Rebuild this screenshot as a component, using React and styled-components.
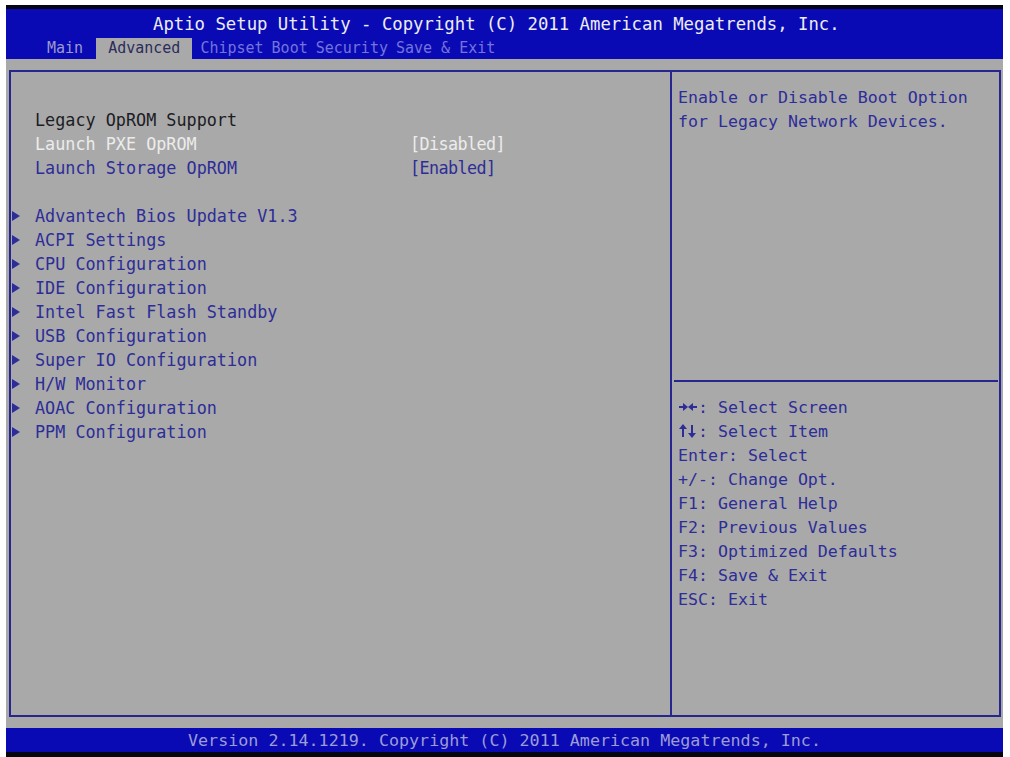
import React from "react";
import styled, { createGlobalStyle } from "styled-components";

const Global = createGlobalStyle`
  html, body { margin: 0; padding: 0; background: #ffffff; }
  body { font-family: "DejaVu Sans Mono", "Liberation Mono", monospace; }
`;

const Screen = styled.div`
  margin: 5px 0 0 6px;
  width: 997px;
  border-top: 4px solid #050515;
  border-bottom: 5px solid #050510;
  background: #a9a9a9;
  display: flex;
  flex-direction: column;
`;

const Header = styled.header`
  height: 50px;
  background: #0a0ab4;
  display: flex;
  flex-direction: column;
`;

const Title = styled.div`
  height: 29px;
  padding: 2px 0 0 147px;
  box-sizing: border-box;
  line-height: 27px;
  font-size: 17.3px;
  color: #ececf4;
  white-space: pre;
`;

const TabRow = styled.nav`
  height: 21px;
  display: flex;
  align-items: stretch;
  padding-left: 37px;
`;

const Tab = styled.div`
  padding: 0 ${(p) => (p.$active ? "12px" : "4px")};
  margin: 0 ${(p) => (p.$active ? "4px 0 9px" : "0")};
  line-height: 21px;
  font-size: 15px;
  white-space: pre;
  color: ${(p) => (p.$active ? "#2c2c5c" : p.$dim ? "#9a9acc" : "#7474dc")};
  background: ${(p) => (p.$active ? "#a9a9a9" : "transparent")};
`;

const Body = styled.main`
  height: 669px;
  box-sizing: border-box;
  padding: 11px 2px 11px 3px;
  display: flex;
`;

const Panel = styled.section`
  flex: 1;
  border: 2px solid #26268e;
  display: flex;
`;

const LeftCol = styled.div`
  width: 661px;
  border-right: 2px solid #26268e;
  padding: 36px 0 0 1px;
  box-sizing: border-box;
  display: flex;
  flex-direction: column;
`;

const Row = styled.div`
  height: 24px;
  display: flex;
  align-items: center;
  font-size: 16.8px;
  white-space: pre;
  color: ${(p) => p.$color || "#2d2d98"};
`;

const Marker = styled.span`
  width: 23px;
  display: flex;
  align-items: center;
  flex-shrink: 0;
`;

const Triangle = styled.span`
  width: 0;
  height: 0;
  border-left: 8px solid #2d2d98;
  border-top: 5.5px solid transparent;
  border-bottom: 5.5px solid transparent;
`;

const Label = styled.span`
  width: 375px;
  flex-shrink: 0;
`;

const Value = styled.span`
  letter-spacing: -0.6px;
`;

const RightCol = styled.div`
  flex: 1;
  display: flex;
  flex-direction: column;
`;

const HelpTop = styled.div`
  height: 308px;
  box-sizing: border-box;
  padding: 13px 0 0 6px;
`;

const Divider = styled.div`
  height: 2px;
  margin: 0 1px 0 2px;
  background: #26268e;
`;

const HelpList = styled.div`
  padding: 13px 0 0 6px;
`;

const HelpLine = styled.div`
  height: 24px;
  display: flex;
  align-items: center;
  font-size: 16.6px;
  white-space: pre;
  color: #2d2d98;
`;

const KeyIcon = styled.svg`
  width: 20px;
  height: 14px;
  flex-shrink: 0;
`;

const Footer = styled.footer`
  height: 24px;
  background: #0a0ab4;
  color: #9c9cd6;
  font-size: 16.7px;
  line-height: 24px;
  text-align: center;
  white-space: pre;
`;

const menus = [
  "Advantech Bios Update V1.3",
  "ACPI Settings",
  "CPU Configuration",
  "IDE Configuration",
  "Intel Fast Flash Standby",
  "USB Configuration",
  "Super IO Configuration",
  "H/W Monitor",
  "AOAC Configuration",
  "PPM Configuration",
];

const help = [
  "Enter: Select",
  "+/-: Change Opt.",
  "F1: General Help",
  "F2: Previous Values",
  "F3: Optimized Defaults",
  "F4: Save & Exit",
  "ESC: Exit",
];

const LeftRight = () => (
  <KeyIcon viewBox="0 0 20 14">
    <g stroke="#2d2d98" strokeWidth="2" fill="#2d2d98">
      <line x1="1" y1="7" x2="7" y2="7" />
      <line x1="19" y1="7" x2="13" y2="7" />
    </g>
    <g fill="#2d2d98">
      <polygon points="5,3 10,7 5,11" />
      <polygon points="15,3 10,7 15,11" />
    </g>
  </KeyIcon>
);

const UpDown = () => (
  <KeyIcon viewBox="0 0 20 14">
    <g stroke="#2d2d98" strokeWidth="2">
      <line x1="5" y1="13" x2="5" y2="4" />
      <line x1="14" y1="1" x2="14" y2="10" />
    </g>
    <g fill="#2d2d98">
      <polygon points="1,5 5,0 9,5" />
      <polygon points="10,9 14,14 18,9" />
    </g>
  </KeyIcon>
);

export default function App() {
  return (
    <>
      <Global />
      <Screen>
        <Header>
          <Title>Aptio Setup Utility - Copyright (C) 2011 American Megatrends, Inc.</Title>
          <TabRow>
            <Tab $dim>Main</Tab>
            <Tab $active>Advanced</Tab>
            <Tab>Chipset</Tab>
            <Tab>Boot</Tab>
            <Tab>Security</Tab>
            <Tab>Save &amp; Exit</Tab>
          </TabRow>
        </Header>
        <Body>
          <Panel>
            <LeftCol>
              <Row $color="#1c1c24">
                <Marker />
                <Label>Legacy OpROM Support</Label>
              </Row>
              <Row $color="#ececec">
                <Marker />
                <Label>Launch PXE OpROM</Label>
                <Value>[Disabled]</Value>
              </Row>
              <Row>
                <Marker />
                <Label>Launch Storage OpROM</Label>
                <Value>[Enabled]</Value>
              </Row>
              <Row />
              {menus.map((m) => (
                <Row key={m}>
                  <Marker>
                    <Triangle />
                  </Marker>
                  <Label>{m}</Label>
                </Row>
              ))}
            </LeftCol>
            <RightCol>
              <HelpTop>
                <HelpLine>Enable or Disable Boot Option</HelpLine>
                <HelpLine>for Legacy Network Devices.</HelpLine>
              </HelpTop>
              <Divider />
              <HelpList>
                <HelpLine>
                  <LeftRight />: Select Screen
                </HelpLine>
                <HelpLine>
                  <UpDown />: Select Item
                </HelpLine>
                {help.map((h) => (
                  <HelpLine key={h}>{h}</HelpLine>
                ))}
              </HelpList>
            </RightCol>
          </Panel>
        </Body>
        <Footer>Version 2.14.1219. Copyright (C) 2011 American Megatrends, Inc.</Footer>
      </Screen>
    </>
  );
}
